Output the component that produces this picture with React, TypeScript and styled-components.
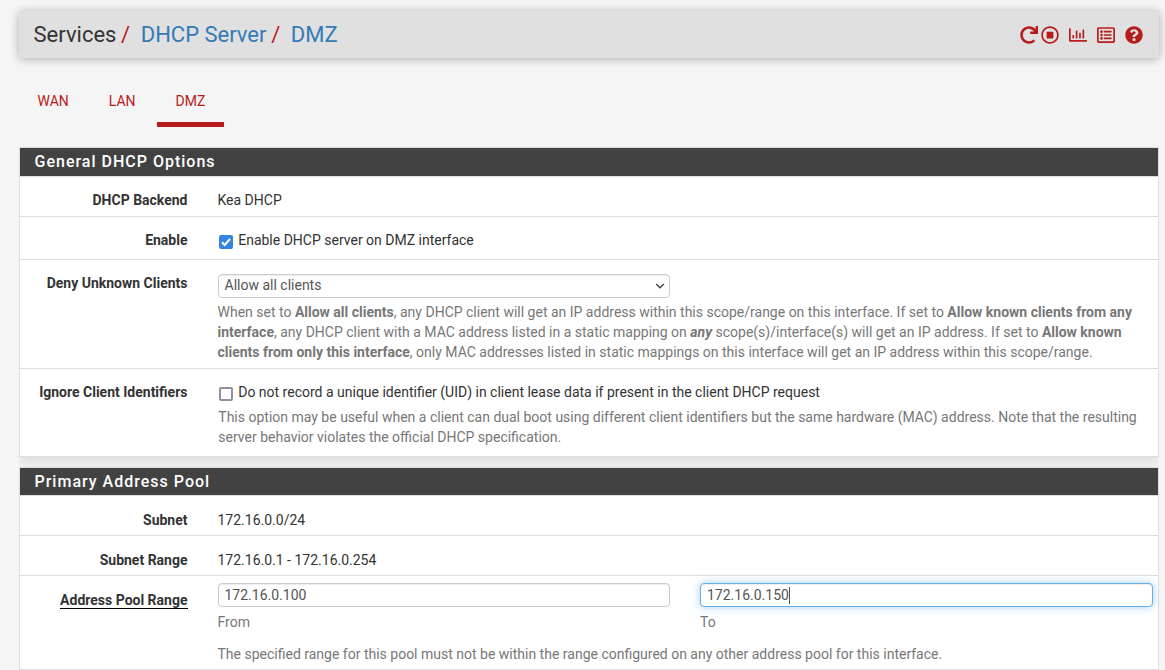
import React from 'react';
import styled, { createGlobalStyle, css } from 'styled-components';
import { FaRedo, FaRegStopCircle, FaRegChartBar, FaRegListAlt, FaQuestionCircle } from 'react-icons/fa';

const GlobalStyle = createGlobalStyle`
  * { box-sizing: border-box; }
  html, body { height: 100%; }
  body {
    margin: 0;
    overflow: hidden;
    background: #f5f5f5;
    color: #333;
    font: 14px/20px Roboto, "Liberation Sans", sans-serif;
  }
`;

const Page = styled.div`
  padding: 11px 6px 0 19px;
`;

const Header = styled.header`
  display: flex;
  align-items: center;
  justify-content: space-between;
  height: 47px;
  padding: 0 16px 0 14.5px;
  border-radius: 4px;
  background: #e0e0e0;
  box-shadow: 0 1px 10px rgba(0, 0, 0, 0.3);
`;

const Breadcrumb = styled.nav`
  display: flex;
  font-size: 22px;
  line-height: 24px;
`;

const Slash = styled.span`
  color: #b71c1c;
  margin: 0 10.5px 0 4.7px;
`;

const Crumb = styled.a`
  color: #337ab7;
`;

const Actions = styled.div`
  display: flex;
  gap: 10px;
  color: #b71c1c;
  font-size: 18px;
  padding-top: 1px;
  svg { display: block; }
  svg:first-child { margin-right: -7px; }
`;

const Tabs = styled.nav`
  display: flex;
  margin-top: 23px;
`;

const Tab = styled.a<{ $active?: boolean }>`
  height: 46px;
  padding: 10px 18.5px 0;
  margin-right: 3px;
  color: #b71c1c;
  border-bottom: 5px solid ${p => (p.$active ? '#b71c1c' : 'transparent')};
`;

const PanelStack = styled.main`
  margin-top: 20px;
  overflow: hidden;
`;

const Panel = styled.section`
  border: 1px solid #ddd;
  background: #fff;
  box-shadow: 0 5px 10px rgba(0, 0, 0, 0.1);
  margin: 0 0 10px;
`;

const PanelHeading = styled.h2<{ $height: number }>`
  height: ${p => p.$height}px;
  margin: 0;
  padding-left: 14.5px;
  background: #424242;
  color: #fff;
  font-size: 16px;
  font-weight: 500;
  letter-spacing: 1px;
  line-height: 27px;
`;

const Row = styled.div<{ $height: number }>`
  display: grid;
  grid-template-columns: 167.5px 935px;
  column-gap: 30px;
  height: ${p => p.$height}px;
  border-top: 1px solid #ddd;
`;

const Label = styled.div<{ $top?: number }>`
  padding-top: ${p => p.$top ?? 13}px;
  text-align: right;
  font-weight: 700;
`;

const Required = styled.span`
  display: inline-block;
  height: 19px;
  border-bottom: 1px solid #000;
`;

const Field = styled.div<{ $top?: number }>`
  padding-top: ${p => p.$top ?? 13}px;
`;

const Help = styled.p<{ $top: number; $indent?: boolean }>`
  margin: ${p => p.$top}px ${p => (p.$indent ? -2 : 0)}px 0 ${p => (p.$indent ? 0.8 : 0)}px;
  color: #777;
`;

const CheckLine = styled.label`
  display: flex;
  align-items: flex-start;
  gap: 5.2px;
  padding-left: 1.5px;
`;

const Box = styled.span<{ $checked?: boolean }>`
  width: 14px;
  height: 14px;
  margin-top: 5px;
  border-radius: 2px;
  ${p => p.$checked
    ? css`background: #3584e4;`
    : css`background: #fff; border: 2px solid #8f8f9d;`}
  svg { display: block; width: 14px; height: 14px; }
`;

const control = css`
  height: 24px;
  border: 1px solid #ccc;
  border-radius: 4px;
  background: #fff;
  color: #555;
  padding: 0 6px;
  box-shadow: inset 0 1px 1px rgba(0, 0, 0, 0.075);
`;

const Select = styled.div`
  ${control}
  display: flex;
  justify-content: space-between;
  width: 452.5px;
  line-height: 21px;
  svg { margin: 7px -2px 0 0; }
`;

const Input = styled.div<{ $focus?: boolean }>`
  ${control}
  display: flex;
  line-height: 22px;
  ${p => p.$focus && css`
    border-color: #66afe9;
    box-shadow: inset 0 1px 1px rgba(0, 0, 0, 0.075), 0 0 8px rgba(102, 175, 233, 0.6);
  `}
`;

const Caret = styled.span`
  width: 1px;
  height: 17px;
  margin-top: 3px;
  background: #555;
`;

const Range = styled.div`
  display: grid;
  grid-template-columns: 1fr 1fr;
  column-gap: 30px;
`;

export default function App() {
  return (
    <>
      <GlobalStyle />
      <Page>
        <Header>
          <Breadcrumb>
            <span>Services</span>
            <Slash>/</Slash>
            <Crumb>DHCP Server</Crumb>
            <Slash>/</Slash>
            <Crumb>DMZ</Crumb>
          </Breadcrumb>
          <Actions>
            <FaRedo />
            <FaRegStopCircle />
            <FaRegChartBar />
            <FaRegListAlt />
            <FaQuestionCircle />
          </Actions>
        </Header>

        <Tabs>
          <Tab>WAN</Tab>
          <Tab>LAN</Tab>
          <Tab $active>DMZ</Tab>
        </Tabs>

        <PanelStack>
          <GeneralOptions />
          <AddressPool />
        </PanelStack>
      </Page>
    </>
  );
}

function GeneralOptions() {
  return (
    <Panel>
      <PanelHeading $height={28}>General DHCP Options</PanelHeading>
      <Row $height={40}>
        <Label>DHCP Backend</Label>
        <Field>Kea DHCP</Field>
      </Row>
      <Row $height={43}>
        <Label>Enable</Label>
        <Field>
          <CheckLine>
            <Box $checked>
              <svg viewBox="0 0 14 14" fill="none" stroke="#fff" strokeWidth="2">
                <path d="M3 7.3 5.7 10 11 4" />
              </svg>
            </Box>
            Enable DHCP server on DMZ interface
          </CheckLine>
        </Field>
      </Row>
      <Row $height={109}>
        <Label>Deny Unknown Clients</Label>
        <Field $top={14}>
          <Select>
            Allow all clients
            <svg width="10" height="8" viewBox="0 0 10 8" fill="none" stroke="#444" strokeWidth="1.5">
              <path d="M1.2 2 5 5.8 8.8 2" />
            </svg>
          </Select>
          <Help $top={4}>
            When set to <b>Allow all clients</b>, any DHCP client will get an IP address within this
            scope/range on this interface. If set to <b>Allow known clients from any interface</b>, any
            DHCP client with a MAC address listed in a static mapping on <b><i>any</i></b>{' '}
            scope(s)/interface(s) will get an IP address. If set to <b>Allow known clients from only
            this interface</b>, only MAC addresses listed in static mappings on this interface will get
            an IP address within this scope/range.
          </Help>
        </Field>
      </Row>
      <Row $height={88}>
        <Label>Ignore Client Identifiers</Label>
        <Field>
          <CheckLine>
            <Box />
            Do not record a unique identifier (UID) in client lease data if present in the client DHCP request
          </CheckLine>
          <Help $top={5} $indent>
            This option may be useful when a client can dual boot using different client identifiers but
            the same hardware (MAC) address. Note that the resulting server behavior violates the
            official DHCP specification.
          </Help>
        </Field>
      </Row>
    </Panel>
  );
}

function AddressPool() {
  return (
    <Panel>
      <PanelHeading $height={27}>Primary Address Pool</PanelHeading>
      <Row $height={40}>
        <Label $top={14}>Subnet</Label>
        <Field $top={14}>172.16.0.0/24</Field>
      </Row>
      <Row $height={40}>
        <Label $top={14}>Subnet Range</Label>
        <Field $top={14}>172.16.0.1 - 172.16.0.254</Field>
      </Row>
      <Row $height={94}>
        <Label $top={14}><Required>Address Pool Range</Required></Label>
        <Field $top={7}>
          <Range>
            <div>
              <Input>172.16.0.100</Input>
              <Help $top={5}>From</Help>
            </div>
            <div>
              <Input $focus>172.16.0.150<Caret /></Input>
              <Help $top={5}>To</Help>
            </div>
          </Range>
          <Help $top={12}>
            The specified range for this pool must not be within the range configured on any other
            address pool for this interface.
          </Help>
        </Field>
      </Row>
    </Panel>
  );
}
